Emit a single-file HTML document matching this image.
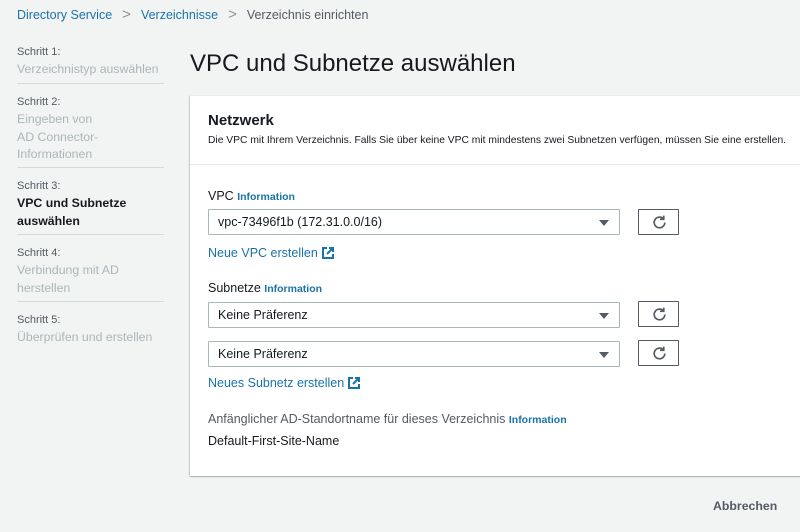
<!DOCTYPE html>
<html><head><meta charset="utf-8"><style>
body{margin:0;width:800px;height:532px;background:#f2f3f3;font-family:"Liberation Sans",sans-serif;position:relative;overflow:hidden;color:#16191f}
.a{position:absolute;white-space:nowrap}
.bc{font-size:12.5px;top:6px}
.lnk{color:#1a73a8}
.side{position:absolute;left:17px;width:147px;font-size:12.3px}
.side .s{font-size:11px;color:#545b64;margin-bottom:3px}
.side .t{color:#aab7b8;line-height:17.5px}
.side .cur{color:#16191f;font-weight:bold}
.hr{position:absolute;left:17px;width:147px;height:1px;background:#d5dbdb}
.card{position:absolute;left:190px;top:96px;width:620px;height:380px;background:#fff;box-shadow:0 1px 1px rgba(0,28,36,.3),-1px 0 1px rgba(0,28,36,.15)}
.sel{position:absolute;left:208px;width:412px;height:26px;border:1px solid #aab7b8;background:#fff;font-size:12.5px;line-height:25px;padding-left:9px;box-sizing:border-box;border-radius:1px}
.sel:after{content:"";position:absolute;right:10px;top:10px;border:5px solid transparent;border-top:6px solid #545b64;border-bottom:0}
.btn{position:absolute;left:638px;width:41px;height:26px;border:1px solid #545b64;background:#fff;box-sizing:border-box;border-radius:1px}
.btn svg{position:absolute;left:12px;top:4px}
.lbl{font-size:12.5px}
.info{color:#1a73a8;font-weight:bold;font-size:10.5px}
.ext{display:inline-block;vertical-align:-2px;margin-left:4px}
</style></head><body>
<div class="a bc" style="left:17px"><span class="lnk">Directory Service</span><span style="color:#879596;margin:0 10px;font-size:15px">&gt;</span><span class="lnk">Verzeichnisse</span><span style="color:#879596;margin:0 10px;font-size:15px">&gt;</span><span style="color:#545b64">Verzeichnis einrichten</span></div>

<div class="side" style="top:46px"><div class="s">Schritt 1:</div><div class="t">Verzeichnistyp auswählen</div></div>
<div class="hr" style="top:83px"></div>
<div class="side" style="top:96px"><div class="s">Schritt 2:</div><div class="t">Eingeben von<br>AD Connector-<br>Informationen</div></div>
<div class="hr" style="top:167px"></div>
<div class="side" style="top:180px"><div class="s">Schritt 3:</div><div class="t cur">VPC und Subnetze<br>auswählen</div></div>
<div class="hr" style="top:234px"></div>
<div class="side" style="top:247px"><div class="s">Schritt 4:</div><div class="t">Verbindung mit AD<br>herstellen</div></div>
<div class="hr" style="top:301px"></div>
<div class="side" style="top:314px"><div class="s">Schritt 5:</div><div class="t">Überprüfen und erstellen</div></div>

<div class="a" style="left:190px;top:50px;font-size:24px">VPC und Subnetze auswählen</div>

<div class="card"></div>
<div class="a" style="left:208px;top:112px;font-size:15px;font-weight:bold">Netzwerk</div>
<div class="a" style="left:208px;top:135px;font-size:10.3px;color:#16191f">Die VPC mit Ihrem Verzeichnis. Falls Sie über keine VPC mit mindestens zwei Subnetzen verfügen, müssen Sie eine erstellen.</div>
<div class="a" style="left:190px;top:164px;width:610px;height:1px;background:#eaeded"></div>

<div class="a lbl" style="left:208px;top:189px">VPC <span class="info">Information</span></div>
<div class="sel" style="top:209px">vpc-73496f1b (172.31.0.0/16)</div>
<div class="btn" style="top:209px"><svg width="17" height="17" viewBox="0 0 16 16" fill="none" stroke="#545b64" stroke-width="1.6"><path d="M13 8a5 5 0 1 1-1.6-3.7"/><path d="M12 1.5v3.5H8.5"/></svg></div>
<div class="a lnk" style="left:208px;top:246px;font-size:12.5px">Neue VPC erstellen<svg class="ext" width="12" height="12" viewBox="0 0 12 12" fill="none" stroke="#1a73a8" stroke-width="2"><path d="M5 1H1v10h10V7M7 1h4v4M11 1L5 7"/></svg></div>

<div class="a lbl" style="left:208px;top:281px">Subnetze <span class="info">Information</span></div>
<div class="sel" style="top:302px">Keine Präferenz</div>
<div class="btn" style="top:301px"><svg width="17" height="17" viewBox="0 0 16 16" fill="none" stroke="#545b64" stroke-width="1.6"><path d="M13 8a5 5 0 1 1-1.6-3.7"/><path d="M12 1.5v3.5H8.5"/></svg></div>
<div class="sel" style="top:341px">Keine Präferenz</div>
<div class="btn" style="top:340px"><svg width="17" height="17" viewBox="0 0 16 16" fill="none" stroke="#545b64" stroke-width="1.6"><path d="M13 8a5 5 0 1 1-1.6-3.7"/><path d="M12 1.5v3.5H8.5"/></svg></div>
<div class="a lnk" style="left:208px;top:376px;font-size:12.5px">Neues Subnetz erstellen<svg class="ext" width="12" height="12" viewBox="0 0 12 12" fill="none" stroke="#1a73a8" stroke-width="2"><path d="M5 1H1v10h10V7M7 1h4v4M11 1L5 7"/></svg></div>

<div class="a lbl" style="left:208px;top:412px;color:#545b64">Anfänglicher AD-Standortname für dieses Verzeichnis <span class="info">Information</span></div>
<div class="a lbl" style="left:208px;top:434px">Default-First-Site-Name</div>

<div class="a" style="left:713px;top:499px;font-size:12.3px;font-weight:bold;color:#545b64">Abbrechen</div>
</body></html>
